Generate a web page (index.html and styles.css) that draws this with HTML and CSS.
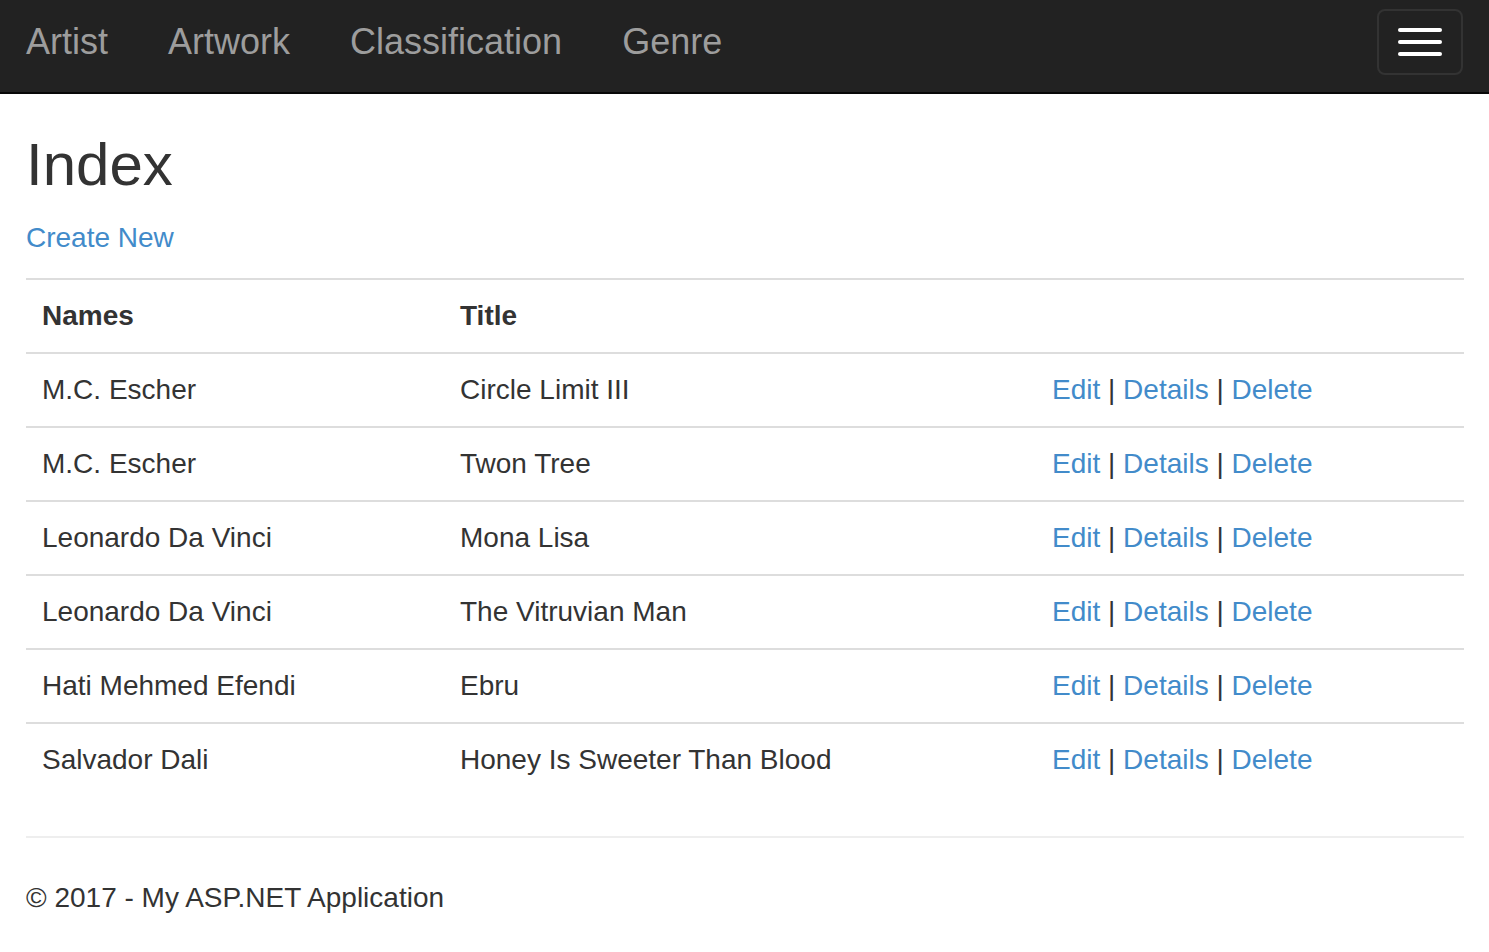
FILE: index.html
```html
<!DOCTYPE html>
<html>
<head>
<meta charset="utf-8">
<title>Index</title>
<link rel="stylesheet" href="styles.css">
</head>
<body>
<nav class="navbar">
  <ul class="nav">
    <li><a href="#">Artist</a></li>
    <li><a href="#">Artwork</a></li>
    <li><a href="#">Classification</a></li>
    <li><a href="#">Genre</a></li>
  </ul>
  <button class="toggle" type="button" aria-label="Toggle navigation">
    <span class="bar"></span>
    <span class="bar"></span>
    <span class="bar"></span>
  </button>
</nav>
<main class="content">
  <h2 class="title">Index</h2>
  <p class="create"><a href="#">Create New</a></p>
  <table class="table">
    <thead>
      <tr><th class="c-name">Names</th><th class="c-title">Title</th><th></th></tr>
    </thead>
    <tbody>
      <tr><td>M.C. Escher</td><td>Circle Limit III</td><td><a href="#">Edit</a> | <a href="#">Details</a> | <a href="#">Delete</a></td></tr>
      <tr><td>M.C. Escher</td><td>Twon Tree</td><td><a href="#">Edit</a> | <a href="#">Details</a> | <a href="#">Delete</a></td></tr>
      <tr><td>Leonardo Da Vinci</td><td>Mona Lisa</td><td><a href="#">Edit</a> | <a href="#">Details</a> | <a href="#">Delete</a></td></tr>
      <tr><td>Leonardo Da Vinci</td><td>The Vitruvian Man</td><td><a href="#">Edit</a> | <a href="#">Details</a> | <a href="#">Delete</a></td></tr>
      <tr><td>Hati Mehmed Efendi</td><td>Ebru</td><td><a href="#">Edit</a> | <a href="#">Details</a> | <a href="#">Delete</a></td></tr>
      <tr><td>Salvador Dali</td><td>Honey Is Sweeter Than Blood</td><td><a href="#">Edit</a> | <a href="#">Details</a> | <a href="#">Delete</a></td></tr>
    </tbody>
  </table>
  <hr class="rule">
  <footer class="footer">
    <p>&copy; 2017 - My ASP.NET Application</p>
  </footer>
</main>
</body>
</html>
```

FILE: styles.css
```css
* { box-sizing: border-box; }

html, body {
  margin: 0;
  padding: 0;
  background: #fff;
}

body {
  font-family: "Liberation Sans", Arial, sans-serif;
  font-size: 28px;
  line-height: 40px;
  color: #333;
}

a {
  color: #428bca;
  text-decoration: none;
}

.navbar {
  display: flex;
  justify-content: space-between;
  align-items: flex-start;
  height: 94px;
  background: #222;
  border-bottom: 2px solid #080808;
  padding: 0 26px 0 26px;
}

.nav {
  list-style: none;
  margin: 0;
  padding: 22px 0 0 0;
  display: flex;
  gap: 60px;
}

.nav a {
  display: block;
  font-size: 36px;
  line-height: 40px;
  color: #9d9d9d;
}

.toggle {
  margin-top: 9px;
  margin-right: 0;
  width: 86px;
  height: 66px;
  background: transparent;
  border: 2px solid #333;
  border-radius: 8px;
  padding: 0;
  display: flex;
  flex-direction: column;
  align-items: center;
  justify-content: center;
  gap: 8px;
}

.toggle .bar {
  display: block;
  width: 44px;
  height: 4px;
  background: #fff;
  border-radius: 2px;
}

.content {
  padding: 0 25px 0 26px;
}

.title {
  font-size: 60px;
  line-height: 66px;
  font-weight: 500;
  margin: 38px 0 0 0;
  color: #333;
}

.create {
  margin: 20px 0 20px 0;
}

.table {
  width: 100%;
  border-collapse: collapse;
  border-spacing: 0;
  margin-bottom: 40px;
}

.table th,
.table td {
  text-align: left;
  padding: 16px;
  line-height: 40px;
  border-top: 2px solid #ddd;
  vertical-align: top;
}

.table th {
  font-weight: bold;
}

.c-name { width: 418px; }
.c-title { width: 592px; }

.rule {
  margin: 0 0 40px 0;
  border: 0;
  border-top: 2px solid #eee;
  height: 0;
}

.footer p {
  margin: 0;
}
```
